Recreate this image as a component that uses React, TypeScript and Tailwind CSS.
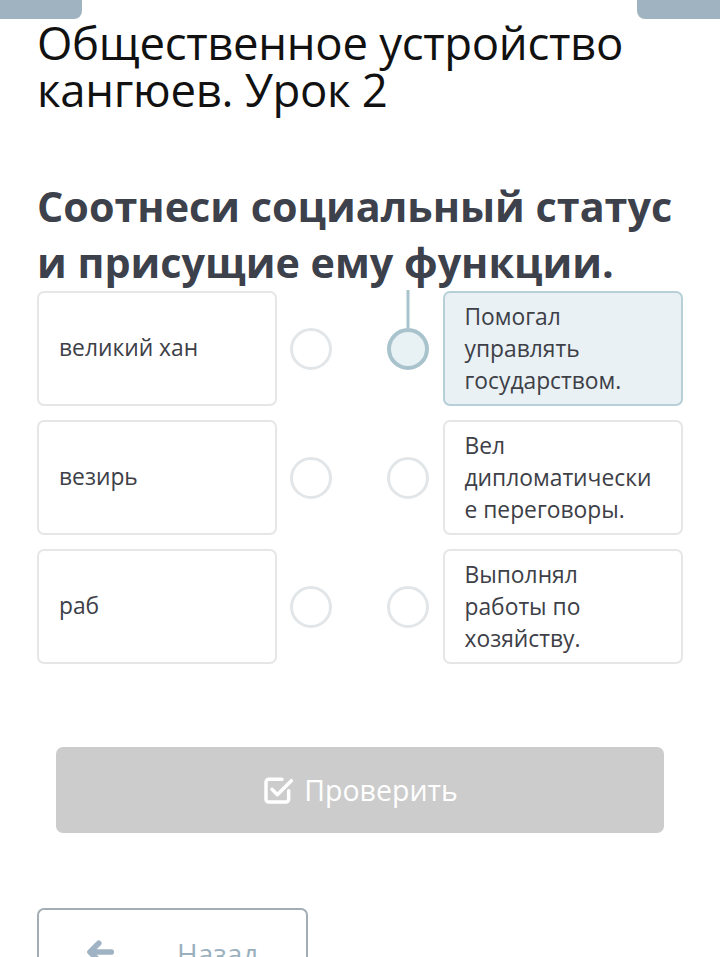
import React from 'react';

const left = ['великий хан', 'везирь', 'раб'];
const right = ['Помогал управлять государством.', 'Вел дипломатически е переговоры.', 'Выполнял работы по хозяйству.'];

function Dot({ active }: { active?: boolean }) {
  return (
    <div className="relative w-[42px] h-[42px] shrink-0">
      {active && <div className="absolute left-1/2 -translate-x-1/2 bottom-full w-[3px] h-[38px] bg-[#a9c3cd]" />}
      <div
        className={
          active
            ? 'w-[42px] h-[42px] rounded-full border-[4px] border-[#a9c3cd] bg-[#e8f1f4]'
            : 'w-[42px] h-[42px] rounded-full border-[3px] border-[#e3e6e8] bg-white'
        }
      />
    </div>
  );
}

export default function App() {
  return (
    <div className="relative w-[720px] h-[957px] overflow-hidden bg-white" style={{ fontFamily: '"Open Sans", sans-serif' }}>
      <div className="absolute left-0 top-0 w-[82px] h-[19px] bg-[#9fb3c0] rounded-br-[8px]" />
      <div className="absolute right-0 top-0 w-[83px] h-[19px] bg-[#9fb3c0] rounded-bl-[8px]" />

      <div className="px-[37px] pt-[19px]">
        <h1 className="text-[45.5px] leading-[47px] font-normal text-[#111] tracking-[-0.3px]">
          Общественное устройство кангюев. Урок 2
        </h1>
        <h2 className="mt-[65px] text-[41.3px] leading-[56px] font-bold text-[#3c414b]">
          Соотнеси социальный статус и присущие ему функции.
        </h2>

        <div className="mt-[1px] flex flex-col gap-[14px]">
          {left.map((l, i) => (
            <div key={i} className="flex items-center h-[115px]">
              <div className="w-[240px] h-full border-2 border-[#e4e6e8] rounded-[7px] flex items-center px-[20px] text-[22.8px] text-[#3d4047]">
                {l}
              </div>
              <div className="ml-[13px]"><Dot /></div>
              <div className="ml-[55px]"><Dot active={i === 0} /></div>
              <div
                className={
                  'ml-[14px] w-[241px] h-full rounded-[7px] flex items-center pl-[20px] pr-[22px] text-[22.8px] leading-[32px] text-[#3d4047] border-2 ' +
                  (i === 0 ? 'bg-[#e9f1f4] border-[#b7d0d8]' : 'border-[#e4e6e8]')
                }
              >
                <span>{right[i]}</span>
              </div>
            </div>
          ))}
        </div>

        <div className="mt-[83px] mx-[19px] h-[86px] bg-[#cccccc] rounded-[7px] flex items-center justify-center gap-[10px] text-white text-[28.5px]">
          <svg width="32" height="32" viewBox="0 0 24 24" fill="none" stroke="white" strokeWidth="2.6" strokeLinecap="round" strokeLinejoin="round">
            <path d="M20 12.5V19a2 2 0 0 1-2 2H5a2 2 0 0 1-2-2V6a2 2 0 0 1 2-2h10" />
            <path d="M7.5 11.5l4 4L22 5" />
          </svg>
          <span>Проверить</span>
        </div>

        <div className="mt-[75px] w-[271px] h-[80px] border-2 border-[#a3adb3] rounded-[7px] flex items-start pt-[22px] pl-[46px] gap-[62px] text-[#9ab0bd] text-[28px]">
          <svg width="30" height="30" viewBox="0 0 24 24" className="mt-[5px]" fill="none" stroke="#9fb3c4" strokeWidth="4.5" strokeLinecap="round" strokeLinejoin="round">
            <path d="M11 5l-7 7 7 7" />
            <path d="M5 12h16" />
          </svg>
          <span>Назад</span>
        </div>
      </div>
    </div>
  );
}
